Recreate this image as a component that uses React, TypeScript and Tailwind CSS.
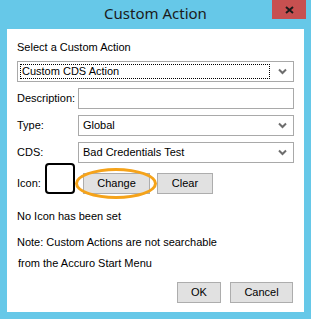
import React from "react";

const Chevron = () => (
  <svg width="9" height="7" viewBox="0 0 9 7" className="shrink-0">
    <path d="M1 1.5 L4.5 5 L8 1.5" fill="none" stroke="#6d6d6d" strokeWidth="2" />
  </svg>
);

const Select = ({ value, focused = false, className = "" }: { value: string; focused?: boolean; className?: string }) => (
  <div className={`h-[21px] border border-[#a9a9a9] bg-white flex items-center pl-[2px] pr-[6px] ${className}`}>
    {focused ? (
      <div className="flex-1 h-[15px] border border-dotted border-black flex items-center pl-[1px] mr-[8px]">
        {value}
      </div>
    ) : (
      <div className="flex-1 pl-[2px]">{value}</div>
    )}
    <Chevron />
  </div>
);

const Button = ({ label, className = "" }: { label: string; className?: string }) => (
  <button className={`h-[21px] bg-[#e1e1e1] border border-[#adadad] flex items-center justify-center text-[11px] text-black ${className}`}>
    {label}
  </button>
);

export default function App() {
  return (
    <div className="w-[311px] h-[319px] bg-[#66c8e8] flex flex-col font-['Liberation_Sans',Arial,sans-serif] text-[11px] text-black overflow-hidden">
      <div className="relative h-[29px] shrink-0 flex items-center justify-center">
        <span className="font-['Noto_Sans',sans-serif] text-[15px] text-[#1b1b1b] -mt-[2px]">Custom Action</span>
        <div className="absolute right-[5px] top-0 w-[34px] h-[19px] bg-[#c75050] flex items-center justify-center">
          <svg width="9" height="8" viewBox="0 0 9 8">
            <path d="M1 1 L8 7 M8 1 L1 7" stroke="#1a1a1a" strokeWidth="2" />
          </svg>
        </div>
      </div>
      <div className="mx-[7px] h-[283px] bg-white px-[10px] flex flex-col">
        <div className="mt-[12px] h-[13px] leading-[13px]">Select a Custom Action</div>
        <Select value="Custom CDS Action" focused className="mt-[7px]" />
        <div className="mt-[6px] flex items-center">
          <span className="w-[61px]">Description:</span>
          <div className="flex-1 h-[21px] border border-[#a9a9a9]" />
        </div>
        <div className="mt-[6px] flex items-center">
          <span className="w-[61px]">Type:</span>
          <Select value="Global" className="flex-1" />
        </div>
        <div className="mt-[6px] flex items-center">
          <span className="w-[61px]">CDS:</span>
          <Select value="Bad Credentials Test" className="flex-1" />
        </div>
        <div className="mt-[0px] flex items-start h-[31px]">
          <span className="mt-[12px] w-[28px]">Icon:</span>
          <div className="w-[30px] h-[31px] border-2 border-black rounded-[4px]" />
          <div className="relative ml-[8px] mt-[10px]">
            <Button label="Change" className="w-[67px]" />
            <div className="absolute -left-[8px] -top-[5px] w-[82px] h-[31px] rounded-[50%] border-[3px] border-[#f5a31a]" />
          </div>
          <Button label="Clear" className="w-[56px] ml-[7px] mt-[10px]" />
        </div>
        <div className="mt-[16px] h-[13px] leading-[13px]">No Icon has been set</div>
        <div className="mt-[13px] h-[13px] leading-[13px]">Note: Custom Actions are not searchable</div>
        <div className="mt-[8px] h-[13px] leading-[13px] pl-[1px]">from the Accuro Start Menu</div>
        <div className="mt-[12px] flex justify-end gap-[9px] pr-[1px]">
          <Button label="OK" className="w-[44px]" />
          <Button label="Cancel" className="w-[63px]" />
        </div>
      </div>
    </div>
  );
}
